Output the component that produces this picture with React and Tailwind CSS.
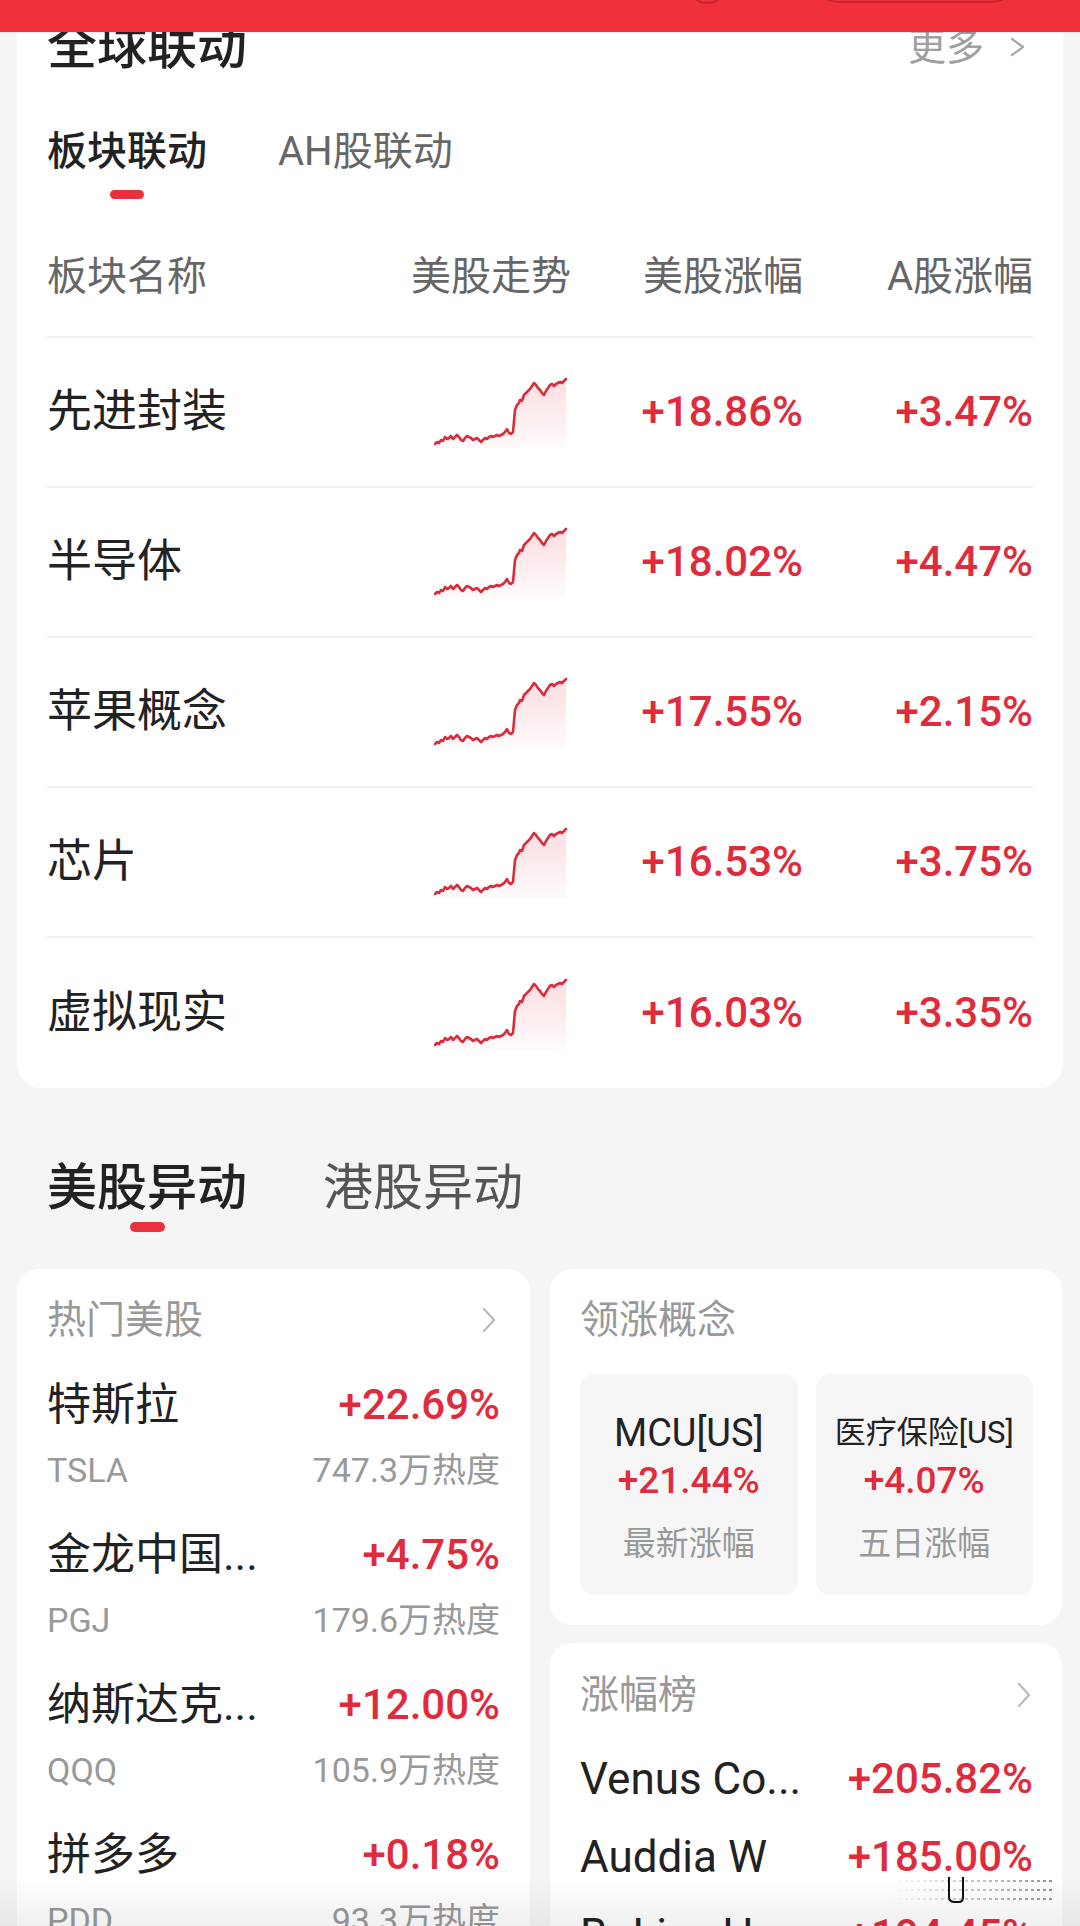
import React from "react";

const RED = "text-[#e02b3d]";

const sectors = [
  { name: "先进封装", us: "+18.86%", a: "+3.47%" },
  { name: "半导体", us: "+18.02%", a: "+4.47%" },
  { name: "苹果概念", us: "+17.55%", a: "+2.15%" },
  { name: "芯片", us: "+16.53%", a: "+3.75%" },
  { name: "虚拟现实", us: "+16.03%", a: "+3.35%" },
];

const hot = [
  { name: "特斯拉", pct: "+22.69%", code: "TSLA", heat: "747.3万热度" },
  { name: "金龙中国...", pct: "+4.75%", code: "PGJ", heat: "179.6万热度" },
  { name: "纳斯达克...", pct: "+12.00%", code: "QQQ", heat: "105.9万热度" },
  { name: "拼多多", pct: "+0.18%", code: "PDD", heat: "93.3万热度" },
];

const gainers = [
  { name: "Venus Co...", pct: "+205.82%" },
  { name: "Auddia W", pct: "+185.00%" },
  { name: "BoLive H...", pct: "+194.45%" },
];

const LINE =
  "M1,68 L3,66 L5,67 L7,64 L9,65 L11,61 L13,63 L15,62 L17,60 L19,63 L21,61 L23,59 L25,61 L27,64 L29,65 L31,62 L33,60 L35,61 L37,62 L39,64 L41,63 L43,62 L45,64 L47,66 L49,64 L51,62 L53,63 L55,61 L57,60 L59,61 L61,60 L63,59 L65,60 L67,59 L69,58 L71,56 L73,53 L75,57 L77,58 L79,56 L80,45 L81,34 L83,29 L85,27 L86,24 L88,25 L90,19 L92,17 L94,15 L96,13 L98,10 L100,7 L102,9 L104,12 L106,14 L108,17 L110,19 L112,15 L114,12 L116,9 L118,8 L120,10 L122,8 L124,7 L126,6 L128,7 L130,5 L132,3";

function Spark({ id }) {
  return (
    <svg width="134" height="72" viewBox="0 0 134 72">
      <defs>
        <linearGradient id={id} x1="0" y1="0" x2="0" y2="1">
          <stop offset="0" stopColor="#e02b3d" stopOpacity="0.16" />
          <stop offset="1" stopColor="#e02b3d" stopOpacity="0.02" />
        </linearGradient>
      </defs>
      <path d={LINE + " L132,72 L1,72 Z"} fill={`url(#${id})`} />
      <path d={LINE} fill="none" stroke="#d92c3c" strokeWidth="2.6" strokeLinejoin="round" strokeLinecap="round" />
    </svg>
  );
}

function Chevron({ w = 14, h = 26, color = "#bbbbbb", sw = 2.2 }) {
  return (
    <svg width={w} height={h} viewBox={`0 0 ${w} ${h}`}>
      <path d={`M2,2 L${w - 2},${h / 2} L2,${h - 2}`} fill="none" stroke={color} strokeWidth={sw} strokeLinecap="round" strokeLinejoin="round" />
    </svg>
  );
}

export default function App() {
  return (
    <div className="relative w-[1080px] h-[1926px] overflow-hidden bg-[#f5f5f5] font-[Roboto,'Noto_Sans_CJK_SC',sans-serif] text-[#222]">
      {/* top red bar */}
      <div className="absolute top-0 left-0 right-0 h-[32px] bg-[#f0303a] z-20 shadow-[0_1px_2px_rgba(0,0,0,0.08)]">
        <div className="absolute left-[686px] top-[-38px] w-[42px] h-[42px] rounded-full border-2 border-[#c82430]" />
        <div className="absolute left-[808px] top-[-60px] w-[214px] h-[63px] rounded-full border-2 border-[#c82430]" />
      </div>

      {/* global linkage card */}
      <div className="mx-[17px] bg-white rounded-b-[24px] px-[30px] pt-[22px]">
        <div className="flex items-center justify-between h-[50px]">
          <div className="text-[50px] leading-[50px] font-medium">全球联动</div>
          <div className="flex items-center gap-[26px] text-[38px] leading-[40px] text-[#a0a0a0] mr-[8px]">
            <span>更多</span>
            <Chevron w={15} h={20} color="#a8a8a8" sw={2.2} />
          </div>
        </div>

        <div className="mt-[60px] flex gap-[71px] text-[40px] leading-[40px]">
          <div className="flex flex-col items-center">
            <span className="font-medium text-[#222]">板块联动</span>
            <span className="mt-[18px] w-[34px] h-[9px] rounded-full bg-[#e8303f]" />
          </div>
          <span className="text-[#666]">AH股联动</span>
        </div>

        <div className="grid grid-cols-[350px_174px_232px_1fr] items-center h-[139px] pt-[18px] border-b-2 border-[#f0f0f0] text-[40px] leading-[40px] text-[#666] whitespace-nowrap">
          <span>板块名称</span>
          <span className="text-right">美股走势</span>
          <span className="text-right">美股涨幅</span>
          <span className="text-right">A股涨幅</span>
        </div>

        {sectors.map((s, i) => (
          <div
            key={s.name}
            className={`grid grid-cols-[350px_174px_232px_1fr] items-center h-[150px] ${i < sectors.length - 1 ? "border-b-2 border-[#f0f0f0]" : ""}`}
          >
            <span className="text-[45px] leading-[50px] text-[#222]">{s.name}</span>
            <div className="flex justify-end pr-[3px]">
              <Spark id={`cg${i}`} />
            </div>
            <span className={`text-right text-[42px] leading-[50px] font-medium ${RED}`}>{s.us}</span>
            <span className={`text-right text-[42px] leading-[50px] font-medium ${RED}`}>{s.a}</span>
          </div>
        ))}
      </div>

      {/* us / hk tabs */}
      <div className="mt-[75px] px-[47px] flex gap-[76px] text-[50px] leading-[50px]">
        <div className="flex flex-col items-center">
          <span className="font-medium text-[#222]">美股异动</span>
          <span className="mt-[9px] w-[35px] h-[10px] rounded-full bg-[#e8303f]" />
        </div>
        <span className="text-[#555]">港股异动</span>
      </div>

      <div className="mt-[37px] mx-[17px] grid grid-cols-[513px_512px] gap-[20px] items-start">
        {/* hot us stocks */}
        <div className="bg-white rounded-[22px] px-[30px] pt-[31px] h-[700px]">
          <div className="flex items-center justify-between h-[40px]">
            <span className="text-[39px] leading-[40px] text-[#999]">热门美股</span>
            <span className="mr-[4px]"><Chevron /></span>
          </div>
          <div className="mt-[40px] flex flex-col gap-[40px]">
            {hot.map((h) => (
              <div key={h.code}>
                <div className="flex items-center justify-between h-[50px]">
                  <span className="text-[44px] leading-[50px] text-[#222]">{h.name}</span>
                  <span className={`text-[42px] leading-[50px] font-medium ${RED}`}>{h.pct}</span>
                </div>
                <div className="mt-[20px] flex items-center justify-between h-[40px] text-[34px] leading-[40px] text-[#999]">
                  <span>{h.code}</span>
                  <span>{h.heat}</span>
                </div>
              </div>
            ))}
          </div>
        </div>

        <div className="flex flex-col gap-[18px]">
          {/* leading concepts */}
          <div className="bg-white rounded-[22px] pl-[30px] pr-[29px] pt-[31px] pb-[30px]">
            <div className="text-[39px] leading-[40px] text-[#999]">领涨概念</div>
            <div className="mt-[34px] grid grid-cols-2 gap-[18px]">
              <div className="h-[221px] rounded-[14px] bg-[#f6f6f6] flex flex-col items-center pt-[37px]">
                <span className="text-[38px] leading-[44px] text-[#222]">MCU[US]</span>
                <span className={`mt-[4px] text-[37px] leading-[44px] font-medium ${RED}`}>+21.44%</span>
                <span className="mt-[21px] text-[33px] leading-[40px] text-[#999]">最新涨幅</span>
              </div>
              <div className="h-[221px] rounded-[14px] bg-[#f6f6f6] flex flex-col items-center pt-[37px]">
                <span className="text-[31px] leading-[44px] text-[#222]">医疗保险[US]</span>
                <span className={`mt-[4px] text-[37px] leading-[44px] font-medium ${RED}`}>+4.07%</span>
                <span className="mt-[21px] text-[33px] leading-[40px] text-[#999]">五日涨幅</span>
              </div>
            </div>
          </div>

          {/* gainers */}
          <div className="bg-white rounded-[22px] pl-[30px] pr-[29px] pt-[32px] h-[400px]">
            <div className="flex items-center justify-between h-[40px]">
              <span className="text-[39px] leading-[40px] text-[#999]">涨幅榜</span>
              <span className="mr-[2px]"><Chevron /></span>
            </div>
            <div className="mt-[39px] flex flex-col gap-[28px]">
              {gainers.map((g) => (
                <div key={g.name} className="flex items-center justify-between h-[50px]">
                  <span className="text-[44px] leading-[50px] text-[#222]">{g.name}</span>
                  <span className={`text-[42px] leading-[50px] font-medium ${RED}`}>{g.pct}</span>
                </div>
              ))}
            </div>
          </div>
        </div>
      </div>

      {/* bottom watermark + fade */}
      <svg className="absolute left-[883px] top-[1875px] z-10" width="175" height="30" viewBox="0 0 175 30">
        <defs>
          <linearGradient id="wm" x1="0" y1="0" x2="1" y2="0">
            <stop offset="0" stopColor="#000" stopOpacity="0" />
            <stop offset="1" stopColor="#000" stopOpacity="0.55" />
          </linearGradient>
        </defs>
        <path d="M10,6 H170 M10,15 H170 M10,24 H170" stroke="url(#wm)" strokeWidth="1.5" strokeDasharray="3 3" />
        <path d="M66,2 V22 Q66,27 72,27 H76 Q80,27 80,22 V2" fill="none" stroke="#111" strokeWidth="2" />
      </svg>
      <div className="absolute bottom-0 left-0 right-0 h-[50px] bg-gradient-to-b from-transparent to-black/[0.06] pointer-events-none" />
    </div>
  );
}
